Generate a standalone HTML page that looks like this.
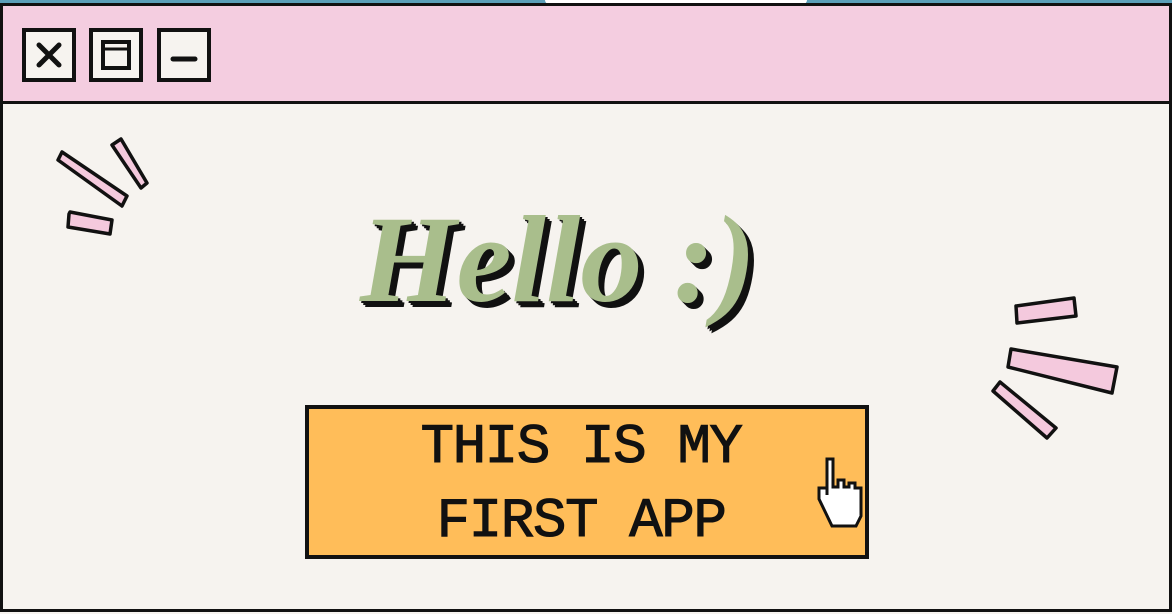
<!DOCTYPE html>
<html><head><style>
html,body{margin:0;padding:0;width:1172px;height:614px;overflow:hidden;background:#f6f3ef}
.top{position:absolute;left:0;top:0;width:1172px;height:3px;background:#5b9fb8}
.topw{position:absolute;left:545px;top:0;width:262px;height:4px;background:#fff;border-radius:0 0 6px 6px}
.win{position:absolute;left:0;top:3px;width:1166px;height:603px;border:3px solid #111;background:#f6f3ef}
.bar{position:absolute;left:0;top:0;width:1166px;height:95px;background:#f4cde0;border-bottom:3px solid #111}
.b{position:absolute;top:22px;width:46px;height:46px;border:4px solid #111;background:#f6f3ef}
.hello{position:absolute;left:0;width:1116px;top:190px;text-align:center;font:italic bold 124px "Liberation Serif",serif;color:#a9be8c;text-shadow:2px 2px 0 #111,4px 4px 0 #111,6px 6px 0 #111;letter-spacing:0px;line-height:140px}
.btn{position:absolute;left:305px;top:405px;width:556px;height:146px;border:4px solid #111;background:#ffbd59}
.btxt{position:absolute;left:0;width:556px;text-align:center;font:56px "Liberation Mono",monospace;color:#111;line-height:76px;top:0;margin-left:-6px;letter-spacing:-1.5px;-webkit-text-stroke:1px #111}
</style></head><body>
<div class="top"></div><div class="topw"></div>
<div class="win">
 <div class="bar">
  <div class="b" style="left:19px"><svg width="46" height="46"><path d="M13 13L33 33M33 13L13 33" stroke="#111" stroke-width="5" stroke-linecap="round"/></svg></div>
  <div class="b" style="left:86px"><svg width="46" height="46"><rect x="10" y="10" width="26" height="26" fill="none" stroke="#111" stroke-width="4"/><line x1="10" y1="17" x2="36" y2="17" stroke="#111" stroke-width="3"/></svg></div>
  <div class="b" style="left:154px"><svg width="46" height="46"><line x1="12" y1="27" x2="34" y2="27" stroke="#111" stroke-width="5" stroke-linecap="round"/></svg></div>
 </div>
</div>
<svg style="position:absolute;left:0;top:0" width="1172" height="614">
 <g fill="#f4c9dd" stroke="#111" stroke-width="3.5" stroke-linejoin="round">
  <path d="M58 160 L62 152 L127 196 L122 206 Z"/>
  <path d="M112 145 L121 139 L147 183 L141 188 Z"/>
  <path d="M69 214 L70 212 L112 220 L110 234 L68 227 Z"/>
  <path d="M1016 306 L1074 298 L1076 316 L1017 323 Z"/>
  <path d="M1011 349 L1117 367 L1112 393 L1008 367 Z"/>
  <path d="M993 391 L1000 382 L1056 428 L1047 438 Z"/>
 </g>
</svg>
<div class="hello">Hello :)</div>
<div class="btn">
 <div class="btxt" style="top:0px">THIS IS MY</div>
 <div class="btxt" style="top:74px">FIRST APP</div>
 <svg style="position:absolute;left:504px;top:46px" width="52" height="80"><path d="M14 4h6v28h5v-7h6v7h5v-4h6v5h6v28l-5 10H19L6 44V33h8v7z" fill="#fff" stroke="#111" stroke-width="3"/></svg>
</div>
</body></html>
